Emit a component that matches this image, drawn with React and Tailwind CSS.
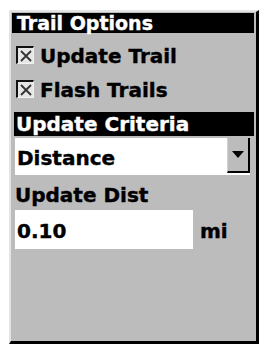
const font = { fontFamily: '"DejaVu Sans", Verdana, sans-serif' };

function CheckBox() {
  return (
    <div className="flex h-[18px] w-[18px] shrink-0 items-center justify-center border-l-2 border-t-2 border-r border-b border-l-[#111] border-t-[#111] border-r-[#f2f2f2] border-b-[#f2f2f2] bg-[#e6e6e6]">
      <svg width="12" height="12" viewBox="0 0 12 12">
        <path d="M1 1 L11 11 M11 1 L1 11" stroke="#333" strokeWidth="1.8" />
      </svg>
    </div>
  );
}

function CheckRow({ label, className }) {
  return (
    <div className={`ml-[5px] flex h-[20px] items-start gap-[6px] ${className}`}>
      <CheckBox />
      <span className="text-[20px] font-bold leading-[20px] text-black [-webkit-text-stroke:0.4px_black]">{label}</span>
    </div>
  );
}

export default function App() {
  return (
    <div className="h-[348px] w-[262px] bg-white" style={font}>
      <div className="ml-[9px] pt-[10px]">
        <div className="flex h-[334px] w-[250px] flex-col border-l-2 border-t-2 border-r-[3px] border-b-[3px] border-l-[#e4e4e4] border-t-[#e4e4e4] border-r-black border-b-black bg-[#bcbcbc]">
          <div className="ml-[1px] mr-[2px] mt-[1px] h-[20px] bg-black pl-[5px] text-[19px] font-bold leading-[20px] text-white [-webkit-text-stroke:0.4px_white]">
            Trail Options
          </div>

          <CheckRow label="Update Trail" className="mt-[13px]" />
          <CheckRow label="Flash Trails" className="mt-[14px]" />

          <div className="ml-[3px] mr-[2px] mt-[12px] h-[24px] bg-black pl-[2px] text-[20px] font-bold leading-[24px] text-white [-webkit-text-stroke:0.4px_white]">
            Update Criteria
          </div>

          <div className="ml-[4px] mr-[6px] mt-[2px] flex h-[37px] bg-white">
            <div className="flex-1 pl-[2px] pt-[3px] text-[20px] font-bold leading-[34px] text-black [-webkit-text-stroke:0.4px_black]">Distance</div>
            <div className="flex h-[35px] w-[23px] items-center justify-center border-l border-r-2 border-b-2 border-l-[#d0d0d0] border-r-black border-b-black bg-[#bcbcbc]">
              <svg width="12" height="8" viewBox="0 0 12 8">
                <path d="M0 0 H12 L6 7 Z" fill="black" />
              </svg>
            </div>
          </div>

          <div className="ml-[4px] mt-[8px] h-[24px] text-[20px] font-bold leading-[24px] text-black [-webkit-text-stroke:0.4px_black]">Update Dist</div>

          <div className="ml-[4px] mt-[3px] flex items-start">
            <div className="h-[39px] w-[178px] bg-white pl-[2px] pt-[11px] text-[20px] font-bold leading-[20px] text-black [-webkit-text-stroke:0.4px_black]">0.10</div>
            <div className="ml-[7px] pt-[11px] text-[20px] font-bold leading-[20px] text-black [-webkit-text-stroke:0.4px_black]">mi</div>
          </div>
        </div>
      </div>
    </div>
  );
}
